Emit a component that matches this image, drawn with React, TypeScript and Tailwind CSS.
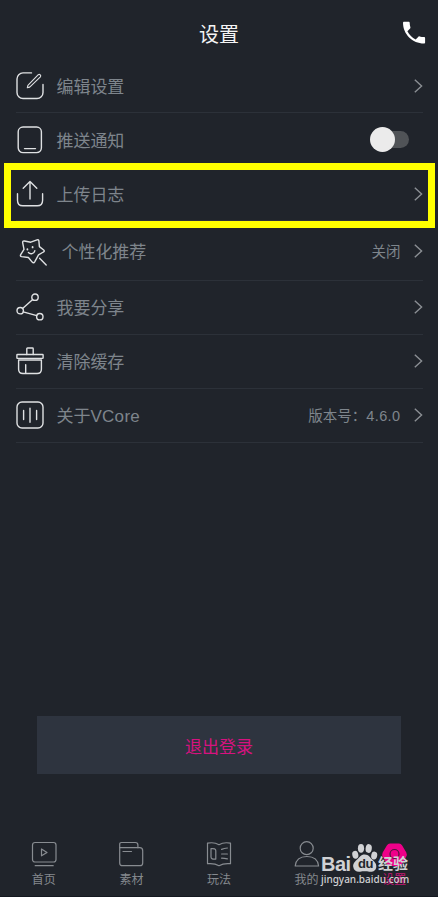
import type { ReactNode } from 'react';

interface RowProps {
  icon: ReactNode;
  label: ReactNode;
  value?: ReactNode;
  className?: string;
  tall?: boolean;
  children?: ReactNode;
}

function Chevron() {
  return (
    <svg className="w-[9px] h-[14px] shrink-0" viewBox="0 0 9 14" fill="none" stroke="#8b8f94" strokeWidth="1.4">
      <path d="M.8 .8 7.6 7 .8 13.2" />
    </svg>
  );
}

function Icon({ children }: { children: ReactNode }) {
  return (
    <svg
      className="w-7 h-7 shrink-0 overflow-visible"
      viewBox="0 0 28 28"
      fill="none"
      stroke="#dfe1e3"
      strokeWidth="1.4"
      strokeLinecap="round"
      strokeLinejoin="round"
    >
      {children}
    </svg>
  );
}

function Row({ icon, label, value, tall, className = '', children }: RowProps) {
  return (
    <div className={`flex items-center border-b border-[#2c3139] ${tall ? 'h-[60px]' : 'h-[54px]'} ${className}`}>
      <div className={tall ? 'ml-[3px]' : ''}>{icon}</div>
      <span className={`text-[17px] leading-6 tracking-[-0.05px] text-[#7e858c] ${tall ? 'ml-[14.5px]' : 'ml-[12.5px]'}`}>
        {label}
      </span>
      <div className="ml-auto flex items-center">
        {value && <span className="mr-[13.5px] text-[14.5px] leading-6 text-[#7e858c]">{value}</span>}
        {children || <Chevron />}
      </div>
    </div>
  );
}

function Tab({ label, active, children }: { label: string; active?: boolean; children: ReactNode }) {
  return (
    <div className="flex flex-1 flex-col items-center pt-px">
      {children}
      <span className={`mt-[2px] text-xs leading-[18px] ${active ? 'text-[#c01673]' : 'text-[#85898e]'}`}>{label}</span>
    </div>
  );
}

function TabIcon({ children }: { children: ReactNode }) {
  return (
    <svg
      className="ml-px w-[27px] h-[27px]"
      viewBox="0 0 27 27"
      fill="none"
      stroke="#888c91"
      strokeWidth="1.2"
      strokeLinecap="round"
      strokeLinejoin="round"
    >
      {children}
    </svg>
  );
}

function Watermark() {
  return (
    <div className="absolute left-[321px] top-[843px] h-[44px] w-[92px] text-[#d0d1d4]">
      <span className="absolute left-0 top-[9px] font-['Liberation_Sans'] text-[20px] leading-6 font-bold tracking-[-0.5px]">
        Bai
      </span>
      <svg className="absolute left-[30px] top-0 h-[30px] w-[27px]" viewBox="0 0 27 30" fill="currentColor">
        <ellipse cx="4.3" cy="11.8" rx="3" ry="4" transform="rotate(-14 4.3 11.8)" />
        <ellipse cx="10" cy="5.3" rx="3.1" ry="4.4" />
        <ellipse cx="17.7" cy="5.5" rx="3.1" ry="4.4" transform="rotate(8 17.7 5.5)" />
        <ellipse cx="23.2" cy="12.6" rx="3" ry="4" transform="rotate(10 23.2 12.6)" />
        <path d="M13.7 11.4c-4 0-5.2 2.8-7.3 4.8C4.2 18.4 1.8 20.2 2.2 23.7c.5 3.8 3.5 5.5 6.9 5 3-.5 6.2-.5 9.2 0 3.4.6 6.7-1 7-4.7.3-3.5-2.1-5.3-4.1-7.4-2.3-2.4-3.4-5.2-7.5-5.2Z" />
      </svg>
      <span className="absolute left-[37px] top-[12px] font-['Liberation_Sans'] text-[13px] leading-[18px] font-bold tracking-[-0.5px] text-[#22262d]">
        du
      </span>
      <span className="absolute left-[57px] top-[8px] whitespace-nowrap text-[15px] leading-6 font-bold">经验</span>
      <span className="absolute left-0 top-[30px] font-['Noto_Sans'] text-[10px] leading-3 font-medium">
        jingyan.baidu.com
      </span>
    </div>
  );
}

export default function App() {
  return (
    <div className="relative flex h-[897px] w-[438px] flex-col overflow-hidden border-b border-[#141820] bg-[#20242b] font-['Noto_Sans_CJK_SC',sans-serif]">
      <header className="flex h-[59px] shrink-0 items-start px-3">
        <div className="w-6" />
        <h1 className="mt-[19px] flex-1 text-center text-[20px] leading-[30px] text-[#f4f4f5]">设置</h1>
        <svg className="mt-[21px] h-6 w-6" viewBox="0 0 24 24" fill="#fff">
          <path d="M1 1.8C1 1.2 1.5.7 2.1.7h4.5c.6 0 1.1.5 1.1 1.1 0 1.5.2 3 .7 4.4.1.4 0 .9-.3 1.2L5.4 10.2c1.8 3.6 4.7 6.4 8.3 8.2l2.7-2.7c.3-.3.8-.4 1.2-.3 1.4.5 2.9.7 4.4.7.6 0 1.1.5 1.1 1.1v4.2c0 .7-.5 1.2-1.1 1.2C10.5 22.6 1 13.2 1 1.8Z" />
        </svg>
      </header>

      <main className="px-4 pr-[15px]">
        <Row
          label="编辑设置"
          icon={
            <Icon>
              <path d="M15.5.9H7A6 6 0 0 0 1 6.9V20.5a6 6 0 0 0 6 6H21a6 6 0 0 0 6-6V12.5" />
              <path d="m11.9 13.3 10.4-10.6a1.5 1.5 0 0 1 2.1 2.1L13.7 15.1l-2.4.7Z" strokeWidth="1.1" />
            </Icon>
          }
        />
        <Row
          label="推送通知"
          icon={
            <Icon>
              <rect x="2.2" y="1" width="23.2" height="25.6" rx="4.8" />
              <path d="M8.5 22.6h11" />
            </Icon>
          }
        >
          <div className="relative mr-[14px] h-[17px] w-[34px] rounded-full bg-[#505357]">
            <div className="absolute -left-[5px] -top-[4px] h-[25px] w-[25px] rounded-full bg-[#ebebeb]" />
          </div>
        </Row>
        <Row
          label="上传日志"
          icon={
            <Icon>
              <path d="M14 19V1.5M7.2 8.3 14 1.5 20.8 8.3" />
              <path d="M1.5 13.7v6.5c0 3.6 1.7 5.6 5.3 5.6h14.4c3.6 0 5.4-2 5.4-5.6v-6.5" />
            </Icon>
          }
        />
        <Row
          tall
          label="个性化推荐"
          value="关闭"
          icon={
            <Icon>
              <path d="M5.4 4 11.8 5.2 18 2.8Q19.8 2.300 19.900 4.100L20.400 9.600 24.700 13Q26 14.200 24.400 15L19.500 17.800 15.700 24.800Q14.600 26.600 13.200 25.100L9.400 20.500 2.600 19.600Q.8 19.200 1.700 17.600L5 12.300 3.700 5.800Q3.400 3.700 5.400 4Z" />
              <path d="m20.6 21.3 6.6 6.7" />
              <path d="M9.4 15.6c2 2 5.700 1.200 6.400-1.800" />
              <path d="M8.400 12.200v.4M13.600 10v.4" strokeWidth="1.8" />
            </Icon>
          }
        />
        <Row
          className="pb-px"
          label="我要分享"
          icon={
            <Icon>
              <circle cx="19" cy="4.2" r="3.2" />
              <circle cx="4.2" cy="17.7" r="3.2" />
              <circle cx="23.8" cy="23.7" r="3.2" />
              <path d="M16.7 6.4 6.6 15.5M7.2 18.9l13.6 3.7" />
            </Icon>
          }
        />
        <Row
          className="pb-px"
          label="清除缓存"
          icon={
            <Icon>
              <path d="M10.8 7.5V1.7q0-.7.7-.7h5q.7 0 .7.7V7.5" />
              <rect x=".9" y="7.5" width="26.2" height="3.9" rx=".6" />
              <path d="M2.6 13v9.2q0 4.3 4.3 4.3h14.2q4.3 0 4.3-4.3V13M2.6 13h22.8M9.7 17.8v8.4" />
            </Icon>
          }
        />
        <Row
          className="pb-px"
          label={
            <>
              关于<span className="font-['Liberation_Sans'] leading-none tracking-[0.3px]">VCore</span>
            </>
          }
          value={
            <>
              版本号：<span className="font-['Liberation_Sans'] leading-none tracking-[0.4px]">4.6.0</span>
            </>
          }
          icon={
            <Icon>
              <rect x="1" y="1" width="26" height="26" rx="5" />
              <path d="M7.6 9.5v9M14 7.2v14M20.6 9.5v9" />
            </Icon>
          }
        />
      </main>

      <button className="mx-[37px] mt-[273px] h-[58px] shrink-0 bg-[#2e343f] pt-px text-[17px] text-[#d6127f]">
        退出登录
      </button>

      <nav className="mt-auto flex h-[56px] shrink-0">
        <Tab label="首页">
          <TabIcon>
            <rect x="1.5" y="1.5" width="23.5" height="19.5" rx="2.5" />
            <path d="M10.5 8v6.8l5.5-3.4ZM4.2 24.7H22.2" />
          </TabIcon>
        </Tab>
        <Tab label="素材">
          <TabIcon>
            <path d="M1.7 6.7V3.2q0-1.7 1.7-1.7h14q2.5 0 2.5 2.5v2.7" />
            <path d="M1.7 6.7h20q3 0 3 3v12.2q0 2.8-2.8 2.8H4.5q-2.8 0-2.8-2.8ZM5 10.500h8.500" />
          </TabIcon>
        </Tab>
        <Tab label="玩法">
          <TabIcon>
            <path d="M1.5 2.2c4-.8 8-.6 11.5 1.5 3.5-2.1 7.5-2.3 11.5-1.5v20.500c-4-.4-8-.1-11.500 2-3.500-2.100-7.500-2.400-11.500-2Z" />
            <path d="M5 7.700q4.800-.6 4.800 2v8.400q-4.800.5-4.800-2ZM15.600 8.400q2.600-1.100 5.800-1.400M15.600 13h5.800M15.600 17.200q2.800.1 5.800.7" />
          </TabIcon>
        </Tab>
        <Tab label="我的">
          <TabIcon>
            <circle cx="12.7" cy="7.2" r="6.5" />
            <path d="M1.2 25c.6-6 5-9.5 11.7-9.5s11.1 3.500 11.700 9.500Z" />
          </TabIcon>
        </Tab>
        <Tab label="设置" active>
          <svg className="h-[27px] w-[27px]" viewBox="0 0 27 27">
            <path d="M9 2.500h9q2 0 3 1.800l4.300 7.200q1 2 0 4L21 23.200Q20 25 18 25H9q-2 0-3-1.800l-4.300-7.700q-1-2 0-4L6 4.300Q7 2.500 9 2.500Z" fill="#ef0089" />
            <circle cx="13.5" cy="13" r="4.5" fill="none" stroke="#4b1738" strokeWidth="1.2" />
          </svg>
        </Tab>
      </nav>

      <Watermark />
      {/* highlight around the upload row */}
      <div className="pointer-events-none absolute left-[4px] top-[163px] h-[65px] w-[431px] border-[7px] border-[#ffff00]" />
    </div>
  );
}
